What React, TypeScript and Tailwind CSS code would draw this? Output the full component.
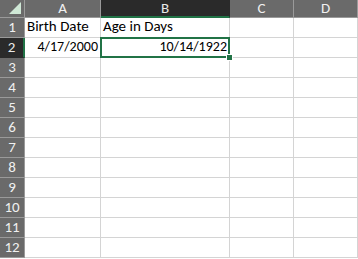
const cols = [
  { key: "A", w: "w-[76px]" },
  { key: "B", w: "w-[129px]" },
  { key: "C", w: "w-[64px]" },
  { key: "D", w: "w-[64px]" },
];

const rows = Array.from({ length: 12 }, (_, i) => i + 1);

const data: Record<string, { text: string; right?: boolean }> = {
  A1: { text: "Birth Date" },
  B1: { text: "Age in Days" },
  A2: { text: "4/17/2000", right: true },
  B2: { text: "10/14/1922", right: true },
};

export default function App() {
  return (
    <div
      className="w-[358px] h-[259px] overflow-hidden bg-white text-[15px] leading-none"
      style={{ fontFamily: "Carlito, 'Liberation Sans', sans-serif" }}
    >
      {/* header row */}
      <div className="flex h-[18px]">
        <div className="relative w-[25px] shrink-0 bg-[#6a6a6a] border-r border-b border-[#9a9a9a]">
          <div className="absolute right-[3px] bottom-[3px] w-0 h-0 border-l-[12px] border-l-transparent border-b-[12px] border-b-[#cfe8d6]" />
        </div>
        {cols.map((c) => (
          <div
            key={c.key}
            className={`${c.w} shrink-0 flex items-center justify-center border-r ${
              c.key === "B"
                ? "bg-[#2a2a2a] border-r-[#2a2a2a] border-b-2 border-b-[#217346] text-[#e8e8e8]"
                : "bg-[#6a6a6a] border-r-[#9a9a9a] border-b border-b-[#9a9a9a] text-[#f0f0f0]"
            }`}
          >
            {c.key}
          </div>
        ))}
      </div>
      {rows.map((r) => (
        <div key={r} className="flex h-[20px]">
          <div
            className={`w-[25px] shrink-0 flex items-center justify-center border-b ${
              r === 2
                ? "bg-[#2a2a2a] border-b-[#2a2a2a] border-r-2 border-r-[#217346] text-[#e8e8e8]"
                : "bg-[#6a6a6a] border-b-[#9a9a9a] border-r border-r-[#9a9a9a] text-[#f0f0f0]"
            }`}
          >
            {r}
          </div>
          {cols.map((c) => {
            const cell = data[`${c.key}${r}`];
            const selected = c.key === "B" && r === 2;
            return (
              <div
                key={c.key}
                className={`${c.w} shrink-0 relative flex items-end pb-[3px] px-[2px] border-r border-b border-[#d4d4d4] text-black whitespace-nowrap ${
                  cell?.right ? "justify-end text-[14px]" : "justify-start"
                } ${selected ? "z-10" : ""}`}
              >
                {cell?.text}
                {selected && (
                  <>
                    <div className="absolute -left-[1px] -top-[1px] -right-[1px] -bottom-[1px] border-2 border-[#217346]" />
                    <div className="absolute -right-[4px] -bottom-[4px] w-[7px] h-[7px] bg-[#217346] border border-white" />
                  </>
                )}
              </div>
            );
          })}
        </div>
      ))}
    </div>
  );
}
